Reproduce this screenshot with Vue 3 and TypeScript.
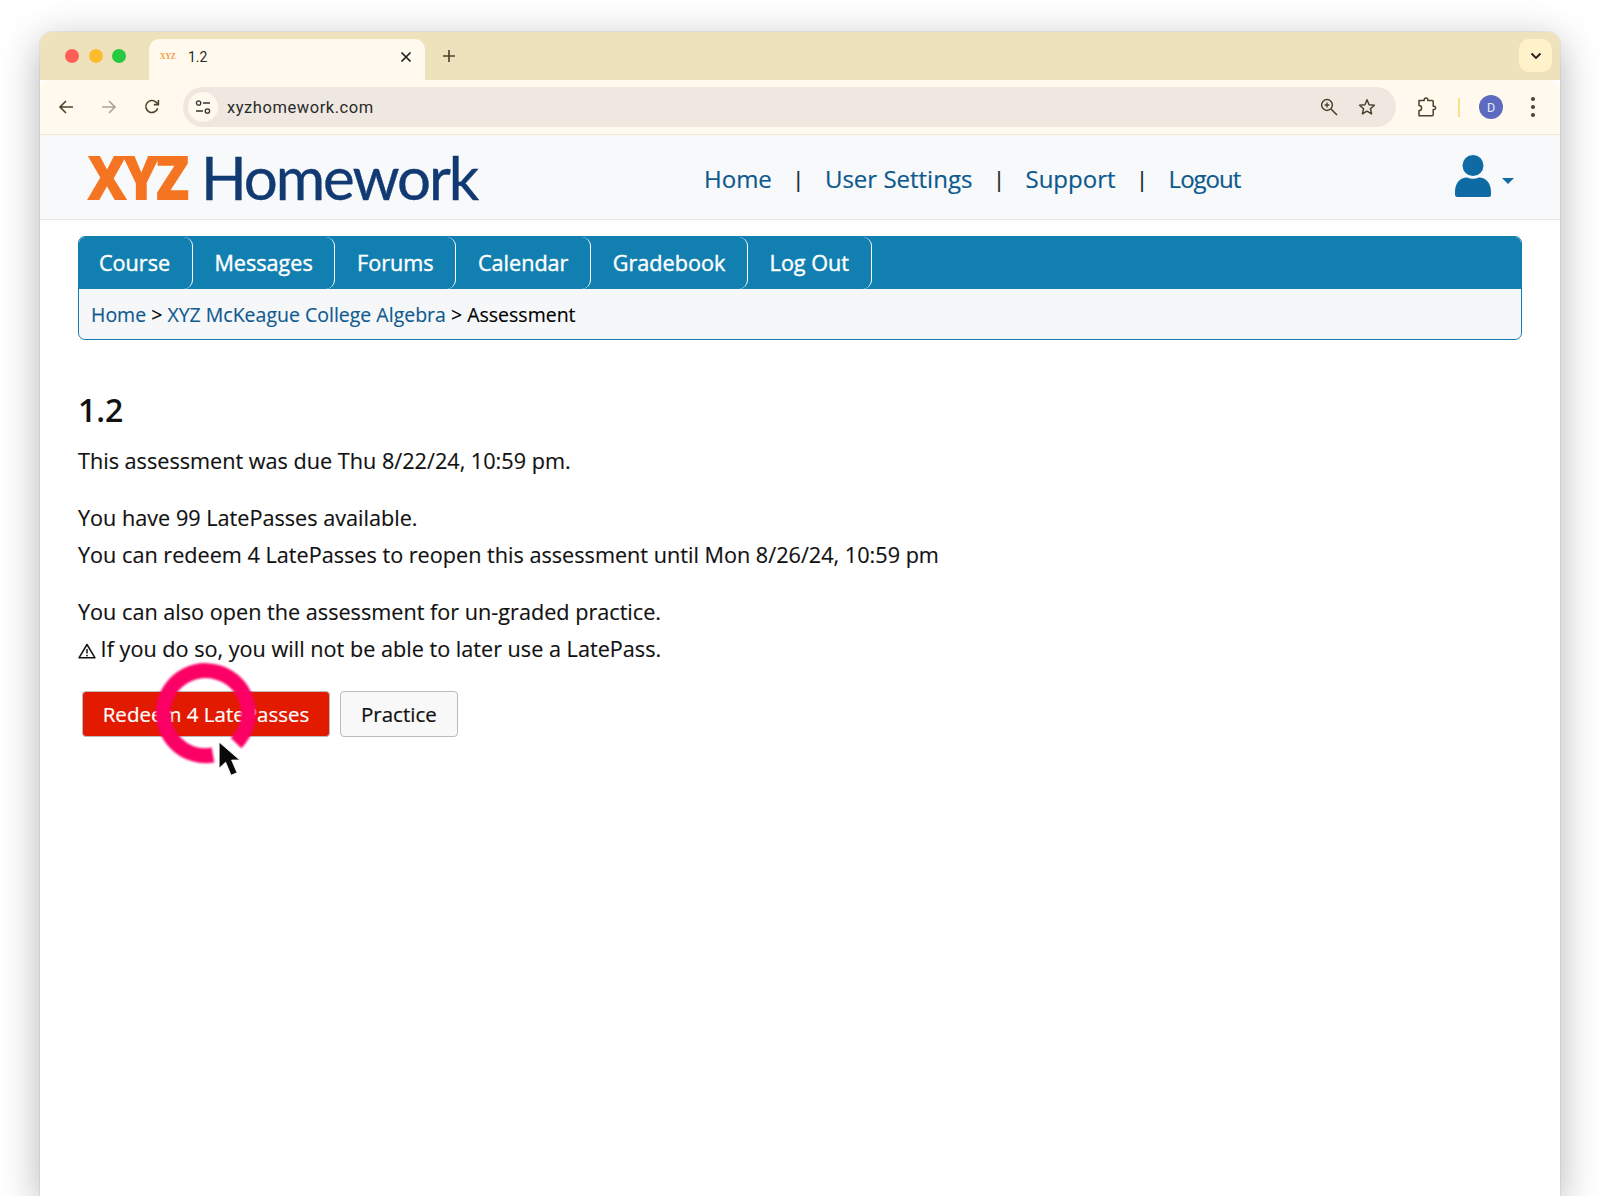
<script setup lang="ts">
const tabs: string[] = ['Course', 'Messages', 'Forums', 'Calendar', 'Gradebook', 'Log Out']
const links: string[] = ['Home', 'User Settings', 'Support', 'Logout']
</script>

<template>
  <div class="page">
    <div class="window">
      <div class="strip">
        <div class="lights">
          <span class="light red"></span><span class="light yellow"></span><span class="light green"></span>
        </div>
        <div class="tab">
          <span class="favicon">XYZ</span>
          <span class="tab-title">1.2</span>
          <svg class="tab-x" viewBox="0 0 12 12" width="12" height="12"><path d="M1.5 1.5l9 9M10.5 1.5l-9 9" stroke="#1f1f1f" stroke-width="1.7" fill="none"/></svg>
        </div>
        <svg class="plus" viewBox="0 0 14 14" width="14" height="14"><path d="M7 1v12M1 7h12" stroke="#4a4632" stroke-width="1.7" fill="none"/></svg>
        <div class="strip-btn">
          <svg viewBox="0 0 12 8" width="12" height="8"><path d="M1.5 1.5L6 6l4.5-4.5" stroke="#1f1f1f" stroke-width="1.8" fill="none"/></svg>
        </div>
      </div>

      <div class="toolbar">
        <svg class="tool back" viewBox="0 0 16 16" width="16" height="16"><path d="M15 8H2M8 2L2 8l6 6" stroke="#474429" stroke-width="1.6" fill="none"/></svg>
        <svg class="tool fwd" viewBox="0 0 16 16" width="16" height="16"><path d="M1 8h13M8 2l6 6-6 6" stroke="#a9a692" stroke-width="1.6" fill="none"/></svg>
        <svg class="tool reload" viewBox="0 0 16 16" width="16" height="16"><path d="M13.6 9.2A6 6 0 1 1 12 3.2L14 5" stroke="#474429" stroke-width="1.6" fill="none"/><path d="M14.4 1v4.6H9.8" stroke="#474429" stroke-width="1.6" fill="none"/></svg>
        <div class="omnibox">
          <span class="site-info">
            <svg viewBox="0 0 16 14" width="16" height="14"><circle cx="3.6" cy="3" r="2.2" stroke="#333" stroke-width="1.3" fill="none"/><path d="M8 3h7M1 11h7" stroke="#333" stroke-width="1.4"/><circle cx="12.4" cy="11" r="2.2" stroke="#333" stroke-width="1.3" fill="none"/></svg>
          </span>
          <span class="url">xyzhomework.com</span>
          <svg class="omni-zoom" viewBox="0 0 18 18" width="18" height="18"><circle cx="7" cy="7" r="5.4" stroke="#474429" stroke-width="1.5" fill="none"/><path d="M4.6 7h4.8M7 4.6v4.8" stroke="#474429" stroke-width="1.4"/><path d="M11 11l6 6" stroke="#474429" stroke-width="1.6"/></svg>
          <svg class="omni-star" viewBox="0 0 18 18" width="18" height="18"><path d="M9 1.8l2.1 4.9 5.3.5-4 3.5 1.2 5.2L9 13.2l-4.6 2.7 1.2-5.2-4-3.5 5.3-.5z" stroke="#474429" stroke-width="1.5" fill="none" stroke-linejoin="round"/></svg>
        </div>
        <svg class="puzzle" viewBox="0 0 20 20" width="20" height="20"><path d="M2 3.6h5.2V2.8a1.8 1.8 0 0 1 3.6 0v.8h4.4a1 1 0 0 1 1 1v4.6h.8a1.6 1.6 0 0 1 0 3.2h-.8v5.4a1 1 0 0 1-1 1H2v-5.2a2.6 2.6 0 0 0 0-5.2z" stroke="#474429" stroke-width="1.5" fill="none" stroke-linejoin="round"/></svg>
        <span class="sep"></span>
        <span class="avatar">D</span>
        <span class="dots"><i></i><i></i><i></i></span>
      </div>

      <header class="site-header">
        <div class="logo"><span class="logo-xyz">XYZ</span><span class="logo-home">Homework</span></div>
        <nav class="site-nav">
          <template v-for="(l, i) in links" :key="l">
            <span v-if="i > 0" class="bar">|</span>
            <a class="site-link">{{ l }}</a>
          </template>
        </nav>
        <div class="user">
          <svg viewBox="0 0 36 42" width="36" height="42"><circle cx="18" cy="10.5" r="10.5" fill="#0f6ba3"/><path d="M0 37c0-9 5-14.500 12-14.500 2 .9 4 1.300 6 1.300s4-.4 6-1.300c7 0 12 5.500 12 14.500v2.500a2.500 2.500 0 0 1-2.500 2.500h-31A2.500 2.500 0 0 1 0 39.500z" fill="#0f6ba3"/></svg>
          <span class="caret"></span>
        </div>
      </header>

      <main class="content">
        <div class="course-nav">
          <div class="tabs">
            <a v-for="t in tabs" :key="t" class="tab-link">{{ t }}</a>
          </div>
          <div class="crumbs"><a>Home</a> &gt; <a>XYZ McKeague College Algebra</a> &gt; Assessment</div>
        </div>

        <h1>1.2</h1>
        <p class="due">This assessment was due Thu 8/22/24, 10:59 pm.</p>
        <p class="block">You have 99 LatePasses available.<br>You can redeem 4 LatePasses to reopen this assessment until Mon 8/26/24, 10:59 pm</p>
        <p class="block">You can also open the assessment for un-graded practice.<br>
          <svg class="warn" viewBox="0 0 18 16" width="18" height="16"><path d="M9 1.500L1 14.800h16z" stroke="#111" stroke-width="1.500" fill="none" stroke-linejoin="round"/><path d="M9 6v4.500" stroke="#111" stroke-width="1.500"/><circle cx="9" cy="12.600" r=".9" fill="#111"/></svg>
          If you do so, you will not be able to later use a LatePass.</p>
        <div class="actions">
          <button class="btn primary">Redeem 4 LatePasses</button>
          <button class="btn">Practice</button>
        </div>
      </main>

      <svg class="ring" viewBox="0 0 110 110" width="110" height="110"><path d="M62 97A42.500 42.500 0 1 1 85 85" stroke="#fb0065" stroke-width="15" fill="none"/></svg>
      <svg class="cursor" viewBox="0 0 22 33" width="24" height="36"><path d="M1 1v24l6-5.500 5 12 5.500-2.500-5-11.500H20z" fill="#0a0a0a" stroke="#fff" stroke-width=".8"/></svg>
    </div>
  </div>
</template>

<style scoped>
.page { height: 1196px; padding: 32px 40px 0; box-sizing: border-box; overflow: hidden; background: #fff; }
.window { position: relative; height: 1164px; background: #fff; border-radius: 12px 12px 0 0; box-shadow: 0 0 0 1px rgba(0,0,0,.05), 0 10px 40px rgba(0,0,0,.3); overflow: hidden; font-family: "Open Sans", sans-serif; }
.strip { height: 48px; background: #ede2bb; display: flex; align-items: flex-start; position: relative; }
.lights { display: flex; gap: 9.500px; padding: 17px 0 0 25px; width: 109px; box-sizing: border-box; }
.light { width: 14px; height: 14px; border-radius: 50%; flex: none; }
.red { background: #ff5f57; } .yellow { background: #febc2e; } .green { background: #28c840; }
.tab { margin-top: 7px; width: 276px; height: 41px; background: #fff9ee; border-radius: 10px 10px 0 0; display: flex; align-items: center; padding: 0 13px 6px 11px; box-sizing: border-box; }
.favicon { font: bold 7.500px "Liberation Serif", serif; color: #f79a3c; width: 28px; }
.tab-title { font: 14px Roboto, sans-serif; color: #2a2a2a; flex: 1; }
.plus { margin: 17px 0 0 17px; }
.strip-btn { position: absolute; right: 8px; top: 7px; width: 33px; height: 33px; border-radius: 10px; background: #fff1c9; display: flex; align-items: center; justify-content: center; }
.toolbar { height: 55px; background: #fff9ee; border-top-left-radius: 10px; border-top-right-radius: 10px; border-bottom: 1px solid #f0e8d5; display: flex; align-items: center; box-sizing: border-box; }
.tool { flex: none; }
.back { margin-left: 18px; } .fwd { margin-left: 27px; } .reload { margin-left: 27px; }
.omnibox { margin-left: 23px; width: 1213px; height: 40px; border-radius: 20px; background: #efe8e1; display: flex; align-items: center; padding: 0 20px 0 5px; box-sizing: border-box; }
.site-info { width: 30px; height: 30px; border-radius: 50%; background: #fff9ee; display: flex; align-items: center; justify-content: center; flex: none; }
.url { margin-left: 9px; font: 16.500px Roboto, sans-serif; letter-spacing: .55px; color: #2a2a2a; flex: 1; }
.omni-zoom { margin-right: 20px; }
.puzzle { margin-left: 21px; }
.sep { width: 2px; height: 19px; background: #fbe08a; margin-left: 21px; }
.avatar { width: 24px; height: 24px; border-radius: 50%; background: #5c6bc0; color: #e8eaf6; font: 12.500px Roboto, sans-serif; display: flex; align-items: center; justify-content: center; margin-left: 19px; }
.dots { display: flex; flex-direction: column; gap: 4px; margin-left: 28px; }
.dots i { width: 4px; height: 4px; border-radius: 50%; background: #474429; }
.site-header { height: 85px; background: #f8f9fb; border-bottom: 1px solid #e4e6ea; display: flex; align-items: center; box-sizing: border-box; padding-left: 47px; position: relative; }
.logo { width: 617px; display: flex; align-items: baseline; white-space: nowrap; line-height: 1; margin-top: -3px; }
.logo-xyz { font: 800 62px "Open Sans", sans-serif; color: #f47421; letter-spacing: -5px; width: 114px; flex: none; transform: scaleX(.9); transform-origin: left; }
.logo-home { font: 400 60px Lato, sans-serif; color: #123a72; letter-spacing: -2.050px; -webkit-text-stroke: .4px #123a72; }
.site-nav { display: flex; align-items: center; font-size: 24px; margin-top: 2px; -webkit-text-stroke: .2px; }
.site-link { color: #0d5a8e; }
.site-link:last-child { letter-spacing: -1px; }
.bar { color: #222; margin: 0 20.500px; font-size: 22px; }
.user { position: absolute; left: 1415px; top: 20px; display: flex; align-items: flex-end; }
.caret { width: 0; height: 0; border: 6px solid transparent; border-top: 6px solid #0f6ba3; border-bottom: 0; margin: 0 0 13px 11px; }
.content { padding: 16px 38px 0; }
.course-nav { border: 1px solid #127fb1; border-radius: 7px; overflow: hidden; background: #f6f7f9; }
.tabs { display: flex; height: 52px; background: #127fb1; }
.tab-link { color: #fff; font-size: 21.600px; padding: 0 21.700px 2px; display: flex; align-items: center; border-right: 1px solid #fff; border-radius: 0 9px 9px 0; -webkit-text-stroke: .4px #fff; }
.tab-link:first-child { padding-left: 20px; }
.crumbs { height: 50px; line-height: 52px; padding: 0 12px; font-size: 19.500px; color: #000; white-space: nowrap; -webkit-text-stroke: .15px; }
.crumbs a { color: #0f5a8f; }
h1 { margin: 48px 0 0; font-size: 32px; font-weight: 600; color: #111; line-height: 44px; }
p { margin: 0; font-size: 21.650px; color: #111; line-height: 36.400px; -webkit-text-stroke: .15px; }
.due { margin-top: 11px; }
.block { margin-top: 21px; }
.warn { vertical-align: -2px; margin-right: -1px; }
.actions { display: flex; gap: 10px; padding: 24px 0 0 4px; }
.btn { height: 46px; padding: 0 20px; font: 20.500px "Open Sans", sans-serif; border-radius: 4px; border: 1px solid #bbb; background: #f8f8f8; color: #111; -webkit-text-stroke: .2px; }
.primary { background: #e21a00; color: #fff; width: 248px; padding: 0; }
.ring { position: absolute; left: 111px; top: 626px; filter: blur(1px); }
.cursor { position: absolute; left: 178px; top: 709px; }
</style>

<style>
html, body { margin: 0; background: #fff; overflow: hidden; }
</style>
